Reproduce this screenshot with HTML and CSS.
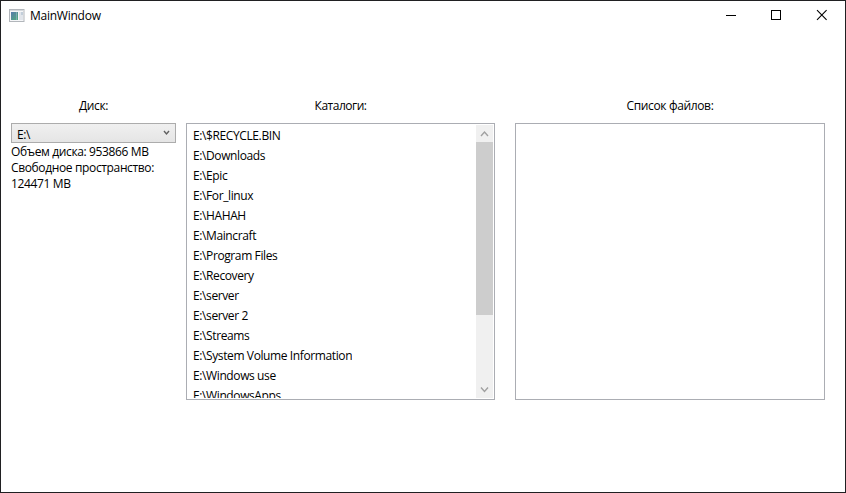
FILE: index.html
```html
<!DOCTYPE html>
<html lang="ru">
<head>
<meta charset="utf-8">
<title>MainWindow</title>
<link rel="stylesheet" href="styles.css">
</head>
<body>
<div class="window">
  <header class="titlebar">
    <svg class="app-icon" width="16" height="14" viewBox="0 0 16 14">
      <defs><linearGradient id="pane" x1="0" y1="0" x2="1" y2="1"><stop offset="0" stop-color="#5679ad"/><stop offset="1" stop-color="#4fae79"/></linearGradient></defs>
      <rect x=".5" y=".5" width="14.5" height="12" fill="#f5f6f8" stroke="#b2b6bb"/>
      <rect x="1" y="1" width="13.5" height="1" fill="#d4d8dc"/>
      <rect x="2" y="3" width="7" height="8" fill="url(#pane)"/>
      <rect x="7" y="3" width="1" height="8" fill="#7fa8b5"/>
      <rect x="10" y="3" width="4" height="8" fill="#e1e5eb"/>
      <rect x="12" y="3" width="2" height="3" fill="#c2ceda"/>
    </svg>
    <span class="title">MainWindow</span>
    <div class="controls">
      <svg width="45" height="29" viewBox="0 0 45 29"><path d="M17 14.5h10" stroke="#000"/></svg>
      <svg width="45" height="29" viewBox="0 0 45 29"><rect x="17.5" y="9.5" width="9" height="9" fill="none" stroke="#000"/></svg>
      <svg width="45" height="29" viewBox="0 0 45 29"><path d="M18 9.2l9.6 9.6M27.6 9.2L18 18.8" stroke="#000" stroke-width="1.1"/></svg>
    </div>
  </header>
  <main class="content">
    <section class="disk">
      <h2 class="label">Диск:</h2>
      <div class="combo"><span>E:\</span>
        <svg width="7" height="6" viewBox="0 0 7 6"><path d="M1 1l2.500 3L6 1" fill="none" stroke="#606060" stroke-width="1.4"/></svg>
      </div>
      <p class="info">Объем диска: 953866 MB<br>Свободное пространство:<br>124471 MB</p>
    </section>
    <section class="folders">
      <h2 class="label">Каталоги:</h2>
      <div class="listbox">
        <ul class="items">
          <li>E:\$RECYCLE.BIN</li>
          <li>E:\Downloads</li>
          <li>E:\Epic</li>
          <li>E:\For_linux</li>
          <li>E:\HAHAH</li>
          <li>E:\Maincraft</li>
          <li>E:\Program Files</li>
          <li>E:\Recovery</li>
          <li>E:\server</li>
          <li>E:\server 2</li>
          <li>E:\Streams</li>
          <li>E:\System Volume Information</li>
          <li>E:\Windows use</li>
          <li>E:\WindowsApps</li>
        </ul>
        <div class="scrollbar">
          <svg width="17" height="17" viewBox="0 0 17 17"><path d="M5 11L8.500 7L12 11" fill="none" stroke="#a0a0a0" stroke-width="1.4"/></svg>
          <div class="thumb"></div>
          <svg width="17" height="17" viewBox="0 0 17 17"><path d="M5 6.500L8.500 10.500L12 6.500" fill="none" stroke="#a0a0a0" stroke-width="1.4"/></svg>
        </div>
      </div>
    </section>
    <section class="files">
      <h2 class="label">Список файлов:</h2>
      <div class="listbox"></div>
    </section>
  </main>
</div>
</body>
</html>
```
FILE: styles.css
```css
* { box-sizing: border-box; }
body {
  margin: 0;
  background: #fff;
  color: #000;
  font: 12px/16px "Open Sans", "Noto Sans", sans-serif;
  letter-spacing: -0.36px;
}
.window {
  width: 846px;
  height: 493px;
  border: 1px solid #202022;
  overflow: hidden;
}
.titlebar { display: flex; align-items: center; height: 29px; padding-left: 8px; }
.app-icon { flex: none; }
.title { margin-left: 5px; letter-spacing: -0.25px; }
.controls { display: flex; margin-left: auto; margin-right: 1px; }
.controls svg { display: block; }
.content {
  display: grid;
  grid-template-columns: 165px 309px 310px;
  padding: 68px 0 0 10px;
}
.folders { margin-left: 10px; width: 309px; }
.folders .label { letter-spacing: -0.5px; }
.files { margin-left: 30px; width: 310px; }
.label {
  height: 25px;
  margin: 0;
  font-size: inherit;
  font-weight: 400;
  text-align: center;
}
.combo {
  display: flex;
  align-items: center;
  justify-content: space-between;
  height: 20px;
  padding: 3px 5px 0 5px;
  border: 1px solid #acacac;
  background: linear-gradient(#f0f0f0, #e5e5e5);
}
.combo svg { margin-top: -4px; }
.info { margin: 1px 0 0; white-space: nowrap; }
.listbox {
  display: flex;
  justify-content: space-between;
  height: 277px;
  padding: 1px;
  border: 1px solid #abadb3;
}
.items {
  height: 273px;
  margin: 0;
  padding: 0 0 0 5px;
  overflow: hidden;
  list-style: none;
  white-space: nowrap;
  letter-spacing: -0.39px;
}
.items li { height: 20px; padding-top: 3px; }
.scrollbar { display: flex; flex-direction: column; width: 17px; background: #f0f0f0; }
.scrollbar svg { display: block; }
.thumb { height: 173px; margin-bottom: auto; background: #cdcdcd; }
```
